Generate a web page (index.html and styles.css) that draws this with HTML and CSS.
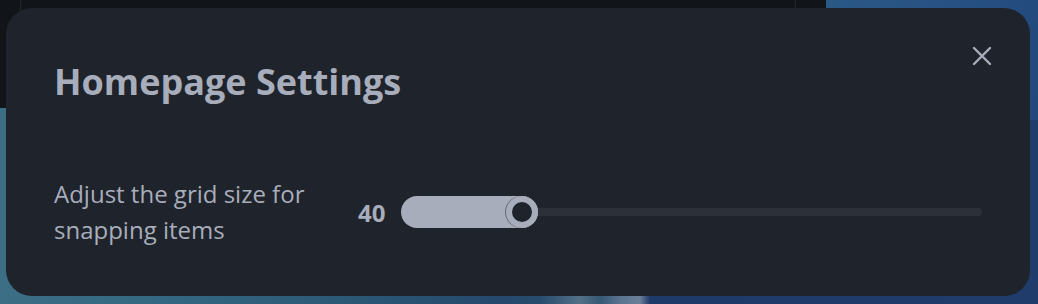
FILE: index.html
```html
<!DOCTYPE html>
<html lang="en">
<head>
<meta charset="utf-8">
<title>Homepage Settings</title>
<link rel="stylesheet" href="styles.css">
</head>
<body>
<div class="desktop">
  <div class="app-panel">
    <div class="app-col app-col-left"></div>
    <div class="app-col app-col-main"></div>
    <div class="app-col app-col-right"></div>
  </div>
</div>
<div class="modal" role="dialog" aria-labelledby="modal-title">
  <div class="modal-header">
    <h2 id="modal-title" class="modal-title">Homepage Settings</h2>
    <button class="close-btn" aria-label="Close">
      <svg width="20" height="20" viewBox="0 0 20 20" fill="none" stroke="currentColor" stroke-width="2.4" stroke-linecap="round">
        <path d="M2 2 L18 18 M18 2 L2 18"/>
      </svg>
    </button>
  </div>
  <div class="setting-row">
    <div class="setting-label">Adjust the grid size for snapping items</div>
    <div class="slider">
      <span class="slider-value">40</span>
      <div class="slider-track">
        <div class="slider-fill" style="width: 137px"><span class="slider-thumb"></span></div>
      </div>
    </div>
  </div>
</div>
</body>
</html>
```
FILE: styles.css
```css
html, body {
  margin: 0;
  padding: 0;
  width: 1038px;
  height: 304px;
  overflow: hidden;
}
body {
  font-family: "Open Sans", "Noto Sans", sans-serif;
  position: relative;
  background:
    linear-gradient(90deg, rgba(255,255,255,0) 0, rgba(255,255,255,0) 540px, rgba(160,175,185,0.35) 580px, rgba(120,140,155,0.15) 600px, rgba(170,185,195,0.4) 620px, rgba(200,210,215,0.45) 640px, rgba(255,255,255,0) 650px),
    linear-gradient(90deg, #3c6f86 0, #336680 180px, #2b5775 360px, #25486c 500px, #2a506e 600px, #1e3a68 640px, #1f3c6a 1038px);
}
.desktop {
  position: absolute;
  inset: 0;
}
.desktop::after {
  content: "";
  position: absolute;
  left: 826px;
  top: 0;
  right: 0;
  height: 120px;
  background: linear-gradient(100deg, #2a5986 0, #275082 60%, #23497c 100%);
}
.app-panel {
  position: absolute;
  left: 0;
  top: 0;
  width: 826px;
  height: 108px;
  display: flex;
  background: #111418;
}
.app-col-left {
  width: 20px;
  border-right: 1px solid #22262c;
}
.app-col-main {
  flex: 1;
  border-right: 1px solid #22262c;
}
.app-col-right {
  width: 30px;
}
.modal {
  position: absolute;
  left: 6px;
  top: 8px;
  width: 1024px;
  height: 288px;
  box-sizing: border-box;
  background: #1f232b;
  border-radius: 26px;
  padding: 48px 48px 0 48px;
  color: #a8adbb;
  z-index: 2;
}
.modal-header {
  display: flex;
  justify-content: space-between;
  align-items: flex-start;
}
.modal-title {
  margin: 4px 0 0 0;
  font-size: 36px;
  font-weight: 700;
  line-height: 44px;
  color: #a8adbb;
}
.close-btn {
  margin: -19px -19px 0 0;
  width: 38px;
  height: 38px;
  border: 0;
  background: transparent;
  color: #a8adbb;
  display: flex;
  align-items: center;
  justify-content: center;
  padding: 0;
}
.setting-row {
  display: flex;
  align-items: center;
  margin-top: 72px;
}
.setting-label {
  width: 290px;
  font-size: 24px;
  line-height: 36px;
  color: #a8adbb;
}
.slider {
  flex: 1;
  display: flex;
  align-items: center;
  margin-left: 14px;
}
.slider-value {
  font-size: 24px;
  font-weight: 700;
  width: 43px;
  color: #a8adbb;
}
.slider-track {
  flex: 1;
  height: 8px;
  border-radius: 4px;
  background: #2b3039;
  position: relative;
  display: flex;
  align-items: center;
}
.slider-fill {
  height: 32px;
  border-radius: 16px;
  background: #a8adbb;
  position: relative;
  flex: none;
}
.slider-thumb {
  position: absolute;
  right: 0;
  top: 0;
  width: 32px;
  height: 32px;
  box-sizing: border-box;
  border-radius: 50%;
  border: 6px solid #a8adbb;
  background: #1f232b;
  box-shadow: -1px 0 0 0 rgba(60,65,75,0.6);
}
```
